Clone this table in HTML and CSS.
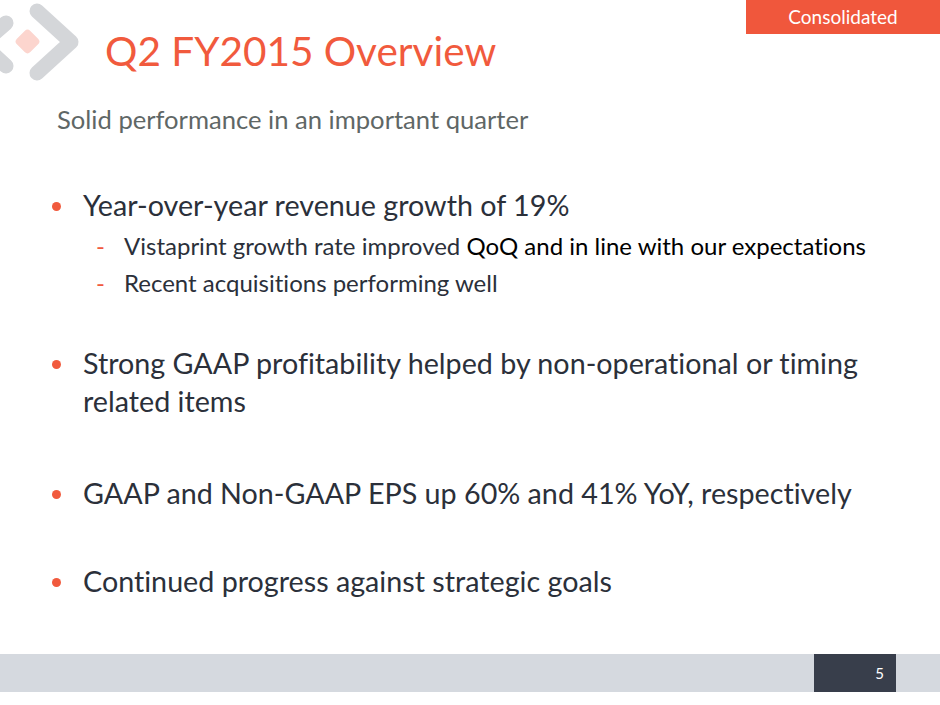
FILE: index.html
```html
<!DOCTYPE html>
<html lang="en">
<head>
<meta charset="utf-8">
<title>Q2 FY2015 Overview</title>
<link rel="stylesheet" href="styles.css">
</head>
<body>
<div class="slide">
  <header class="head">
    <svg class="logo" width="85" height="85" viewBox="0 0 85 85" aria-hidden="true">
      <polyline points="6,23 -18,44 6,66" fill="none" stroke="#d4d6d9" stroke-width="15" stroke-linecap="round" stroke-linejoin="round"/>
      <rect x="18" y="32" width="19" height="19" rx="4" fill="#fcd5ce" transform="rotate(45 27.5 41.5)"/>
      <polyline points="37,11 71,42 37,73" fill="none" stroke="#d4d6d9" stroke-width="15" stroke-linecap="round" stroke-linejoin="round"/>
    </svg>
    <h1 class="title">Q2 FY2015 Overview</h1>
  </header>
  <div class="badge">Consolidated</div>
  <p class="subtitle">Solid performance in an important quarter</p>
  <ul class="bullets">
    <li class="b b1"><span>Year-over-year revenue growth of 19%</span></li>
    <li class="s s1"><span>Vistaprint growth rate improved <span class="dark">QoQ and in line with our expectations</span></span></li>
    <li class="s s2"><span>Recent acquisitions performing well</span></li>
    <li class="b b2"><span>Strong GAAP profitability helped by non-operational or timing related items</span></li>
    <li class="b b3"><span>GAAP and Non-GAAP EPS up 60% and 41% YoY, respectively</span></li>
    <li class="b b4"><span>Continued progress against strategic goals</span></li>
  </ul>
  <footer class="foot">
    <div class="pagebox">5</div>
  </footer>
</div>
</body>
</html>
```
FILE: styles.css
```css
html, body {
  margin: 0;
  padding: 0;
  background: #ffffff;
}
.slide {
  position: relative;
  width: 940px;
  height: 705px;
  overflow: hidden;
  display: flex;
  flex-direction: column;
  font-family: "Lato", "Liberation Sans", sans-serif;
  font-variant-ligatures: none;
  color: #2b303a;
}
.head {
  display: flex;
  align-items: flex-start;
  height: 85px;
}
.logo {
  flex: none;
  display: block;
}
.title {
  margin: 26px 0 0 20px;
  font-weight: 400;
  font-size: 40.5px;
  line-height: 50px;
  color: #f15a3d;
  white-space: nowrap;
}
.badge {
  position: absolute;
  top: 0;
  right: 0;
  width: 194px;
  height: 34px;
  background: #f0573c;
  color: #ffffff;
  font-size: 19px;
  line-height: 34px;
  text-align: center;
}
.subtitle {
  margin: 19px 0 0 57px;
  font-size: 25.6px;
  line-height: 30px;
  color: #5f6766;
}
.bullets {
  list-style: none;
  margin: 0;
  padding: 0;
}
.b {
  display: flex;
  font-size: 28.7px;
  line-height: 38px;
  padding-right: 60px;
}
.b::before {
  content: "";
  flex: none;
  width: 9px;
  height: 9px;
  border-radius: 50%;
  background: #f15a3d;
  margin: 16px 22px 0 52px;
}
.s {
  display: flex;
  font-size: 24px;
  line-height: 37px;
}
.s::before {
  content: "-";
  flex: none;
  width: 28px;
  margin-left: 96px;
  color: #f15a3d;
}
.dark {
  color: #000000;
}
.b1 { margin-top: 52px; }
.s1 { margin-top: 3px; }
.b2 { margin-top: 43px; }
.b3 { margin-top: 54px; }
.b4 { margin-top: 50px; }
.foot {
  margin-top: auto;
  margin-bottom: 13px;
  height: 38px;
  background: #d5d9df;
  display: flex;
}
.pagebox {
  margin-left: 814px;
  width: 82px;
  height: 38px;
  box-sizing: border-box;
  background: #383e4b;
  color: #ffffff;
  font-size: 15px;
  line-height: 38px;
  text-align: right;
  padding-right: 12px;
}
```
